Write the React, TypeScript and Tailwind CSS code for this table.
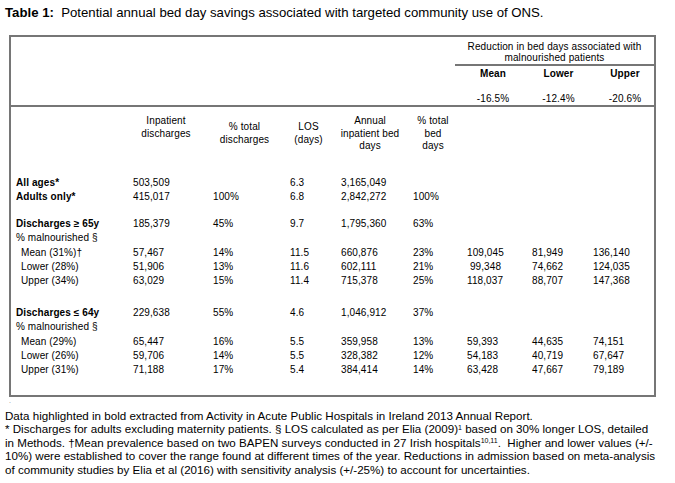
import React from 'react';

// column template shared by header and body rows
const cols = 'grid grid-cols-[115px_80px_77px_51px_72px_54px_65px_61px_68px]';

type RowData = {
  label: string;
  bold?: boolean;
  indent?: boolean;
  values: string[];
};

const groups: RowData[][] = [
  [
    { label: 'All ages*', bold: true, values: ['503,509', '', '6.3', '3,165,049', '', '', '', ''] },
    { label: 'Adults only*', bold: true, values: ['415,017', '100%', '6.8', '2,842,272', '100%', '', '', ''] },
  ],
  [
    { label: 'Discharges \u2265 65y', bold: true, values: ['185,379', '45%', '9.7', '1,795,360', '63%', '', '', ''] },
    { label: '% malnourished \u00a7', values: ['', '', '', '', '', '', '', ''] },
    { label: 'Mean (31%)\u2020', indent: true, values: ['57,467', '14%', '11.5', '660,876', '23%', '109,045', '81,949', '136,140'] },
    { label: 'Lower (28%)', indent: true, values: ['51,906', '13%', '11.6', '602,111', '21%', ' 99,348', '74,662', '124,035'] },
    { label: 'Upper (34%)', indent: true, values: ['63,029', '15%', '11.4', '715,378', '25%', '118,037', '88,707', '147,368'] },
  ],
  [
    { label: 'Discharges \u2264 64y', bold: true, values: ['229,638', '55%', '4.6', '1,046,912', '37%', '', '', ''] },
    { label: '% malnourished \u00a7', values: ['', '', '', '', '', '', '', ''] },
    { label: 'Mean (29%)', indent: true, values: ['65,447', '16%', '5.5', '359,958', '13%', '59,393', '44,635', '74,151'] },
    { label: 'Lower (26%)', indent: true, values: ['59,706', '14%', '5.5', '328,382', '12%', '54,183', '40,719', '67,647'] },
    { label: 'Upper (31%)', indent: true, values: ['71,188', '17%', '5.4', '384,414', '14%', '63,428', '47,667', '79,189'] },
  ],
];

const Row = ({ row }: { row: RowData }) => (
  <div className={`${cols} h-[14.25px] leading-[14.25px]`}>
    <div className={`${row.indent ? 'pl-[10px]' : 'pl-[5px]'} ${row.bold ? 'font-bold' : ''} whitespace-nowrap`}>
      {row.label}
    </div>
    {row.values.map((v, i) => (
      <div key={i} className="pl-[7px] whitespace-pre">
        {v}
      </div>
    ))}
  </div>
);

export default function App() {
  return (
    <div className="w-[675px] h-[483px] bg-white text-black overflow-hidden font-['Liberation_Sans',Arial,sans-serif]">
      {/* Title */}
      <p className="pl-[5px] pt-[5px] text-[13.2px] leading-[16px] whitespace-nowrap">
        <b>Table 1:</b>&nbsp; Potential annual bed day savings associated with targeted community use of ONS.
      </p>

      {/* Table */}
      <div className="ml-[9px] mt-[14px] w-[647px] h-[362px] border-2 border-[#767676] text-[10px] tracking-[0.1px]">
        {/* top header band */}
        <div className="h-[70px] flex border-b-2 border-[#767676]">
          <div className="flex-1" />
          <div className="w-[199px] flex flex-col">
            <div className="pt-[4px] pb-[1px] text-center leading-[11px] border-b-2 border-[#767676]">
              Reduction in bed days associated with
              <br />
              malnourished patients
            </div>
            <div className="grid grid-cols-[71px_61px_67px] font-bold leading-[12px] mt-[2px]">
              <div className="text-center pl-[5px]">Mean</div>
              <div className="text-center pl-[4px]">Lower</div>
              <div className="text-center pl-[9px]">Upper</div>
            </div>
            <div className="grid grid-cols-[71px_61px_67px] leading-[12px] mt-[13px]">
              <div className="text-center pl-[5px]">-16.5%</div>
              <div className="text-center pl-[4px]">-12.4%</div>
              <div className="text-center pl-[9px]">-20.6%</div>
            </div>
          </div>
        </div>

        {/* column headers */}
        <div className={`${cols} h-[69px] leading-[12.5px] text-center`}>
          <div />
          <div className="pt-[8px]">Inpatient<br />discharges</div>
          <div className="pt-[14px]">% total<br />discharges</div>
          <div className="pt-[14px]">LOS<br />(days)</div>
          <div className="pt-[8px]">Annual<br />inpatient bed<br />days</div>
          <div className="pt-[8px]">% total<br />bed<br />days</div>
        </div>

        {/* body */}
        <div className="flex flex-col">
          {groups.map((g, gi) => (
            <div key={gi} className={gi === 1 ? 'mt-[12.5px]' : gi === 2 ? 'mt-[17.75px]' : ''}>
              {g.map((r, ri) => (
                <Row key={ri} row={r} />
              ))}
            </div>
          ))}
        </div>
      </div>

      {/* stray paragraph mark under the table */}
      <div className="pl-[9px] h-[11.5px] text-[7px] leading-[7px] text-[#888]">.</div>

      {/* Footnotes */}
      <div className="pl-[5px] text-[11.6px] leading-[13.6px] whitespace-nowrap">
        Data highlighted in bold extracted from Activity in Acute Public Hospitals in Ireland 2013 Annual Report.
        <br />
        * Discharges for adults excluding maternity patients. § LOS calculated as per Elia (2009)
        <sup className="text-[7px]">1</sup> based on 30% longer LOS, detailed
        <br />
        in Methods. †Mean prevalence based on two BAPEN surveys conducted in 27 Irish hospitals
        <sup className="text-[7px]">10,11</sup>.&nbsp; Higher and lower values (+/-
        <br />
        10%) were established to cover the range found at different times of the year. Reductions in admission based on meta-analysis
        <br />
        of community studies by Elia et al (2016) with sensitivity analysis (+/-25%) to account for uncertainties.
      </div>
    </div>
  );
}
